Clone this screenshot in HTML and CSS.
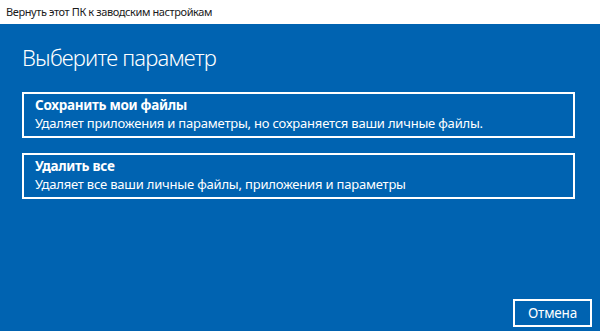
FILE: index.html
```html
<!DOCTYPE html>
<html lang="ru">
<head>
  <meta charset="UTF-8">
  <meta name="viewport" content="width=device-width, initial-scale=1.0">
  <link rel="stylesheet" href="styles.css">
  <title>Вернуть этот ПК к заводским настройкам</title>
</head>
<body>

<div class="titlebar">Вернуть этот ПК к заводским настройкам</div>

<div class="dialog">
  <h1 class="heading">Выберите параметр</h1>

  <div class="options">
    <button class="option">
      <span class="option-title">Сохранить мои файлы</span>
      <span class="option-desc">Удаляет приложения и параметры, но сохраняется ваши личные файлы.</span>
    </button>
    <button class="option">
      <span class="option-title">Удалить все</span>
      <span class="option-desc">Удаляет все ваши личные файлы, приложения и параметры</span>
    </button>
  </div>

  <div class="footer">
    <button class="cancel">Отмена</button>
  </div>
</div>

</body>
</html>
```

FILE: styles.css
```css
body {
  margin: 0;
  font-family: "Noto Sans", "Open Sans", sans-serif;
  background-color: #0063b1;
  height: 331px;
  overflow: hidden;
  display: flex;
  flex-direction: column;
}

.titlebar {
  height: 24px;
  line-height: 23px;
  background-color: #fff;
  color: #1a1a1a;
  font-size: 11px;
  letter-spacing: -0.4px;
  padding-left: 6px;
  flex-shrink: 0;
}

.dialog {
  flex: 1;
  display: flex;
  flex-direction: column;
  padding: 0 8px 4px 22px;
  color: #fff;
}

.heading {
  margin: 18px 0 0 0;
  font-size: 22px;
  font-weight: 300;
  letter-spacing: -0.8px;
  line-height: 30px;
}

.options {
  display: flex;
  flex-direction: column;
  gap: 15px;
  margin-top: 20px;
  width: 553px;
}

.option {
  display: flex;
  flex-direction: column;
  align-items: flex-start;
  height: 46px;
  padding: 2px 11px 0;
  background: transparent;
  border: 2px solid #fff;
  color: #fff;
  font-family: inherit;
  text-align: left;
  cursor: pointer;
}

.option-title {
  font-weight: bold;
  font-size: 13.5px;
  letter-spacing: -0.3px;
  line-height: 18px;
}

.option-desc {
  font-size: 13px;
  letter-spacing: -0.2px;
  line-height: 18px;
}

.footer {
  margin-top: auto;
  display: flex;
  justify-content: flex-end;
}

.cancel {
  width: 79px;
  height: 28px;
  background: transparent;
  border: 2px solid #fff;
  color: #fff;
  font-family: inherit;
  font-size: 13.5px;
  letter-spacing: -0.2px;
  cursor: pointer;
}
```
